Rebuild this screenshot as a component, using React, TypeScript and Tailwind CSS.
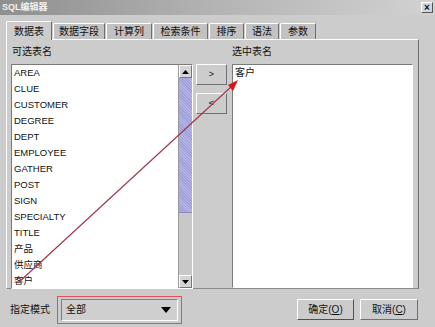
import React from "react";

const tabs = [
  { label: "数据表", w: "w-[46px]", active: true },
  { label: "数据字段", w: "w-[52px]" },
  { label: "计算列", w: "w-[46px]" },
  { label: "检索条件", w: "w-[55px]" },
  { label: "排序", w: "w-[35px]" },
  { label: "语法", w: "w-[34px]" },
  { label: "参数", w: "w-[36px]" },
];

const tables = [
  "AREA",
  "CLUE",
  "CUSTOMER",
  "DEGREE",
  "DEPT",
  "EMPLOYEE",
  "GATHER",
  "POST",
  "SIGN",
  "SPECIALTY",
  "TITLE",
  "产品",
  "供应商",
  "客户",
];

const font = "font-['Liberation_Sans','Noto_Sans_CJK_SC',sans-serif]";

function Tri({ up }: { up?: boolean }) {
  return (
    <svg width="7" height="4" viewBox="0 0 7 4">
      <path d={up ? "M0 4 L3.5 0 L7 4 Z" : "M0 0 L7 0 L3.5 4 Z"} fill="#000" />
    </svg>
  );
}

export default function App() {
  return (
    <div className={`relative w-[435px] h-[327px] overflow-hidden bg-[#cccccc] text-[#111] ${font}`}>
      {/* title bar */}
      <div className="h-[15px] flex items-center justify-between pl-[2px] pr-[2px] bg-gradient-to-r from-[#8f8f8f] via-[#b4b4b4] to-[#d2d2d2]">
        <span className="text-[9px] font-bold text-[#f2f2f2] leading-none">SQL编辑器</span>
        <div className="w-[12px] h-[11px] bg-[#d6d6d6] border-t border-l border-white border-r border-b border-r-[#555] border-b-[#555] flex items-center justify-center text-[10px] font-bold leading-none">
          ×
        </div>
      </div>

      {/* tabs */}
      <div className="h-[24px] flex items-end gap-[1px] pl-[6px]">
        {tabs.map((t) => (
          <div
            key={t.label}
            className={`${t.w} flex items-center justify-center text-[10px] rounded-tl-[2px] border-t border-l border-white border-r border-r-[#6e6e6e] ${
              t.active ? "h-[19px] bg-[#cccccc] relative top-[1px] z-10" : "h-[16px] bg-[#c2c2c2]"
            }`}
          >
            {t.label}
          </div>
        ))}
      </div>

      {/* panel */}
      <div className="ml-[6px] w-[413px] h-[250px] border-t border-l border-white border-r border-b border-r-[#6e6e6e] border-b-[#8a8a8a] pl-[4px] pt-[5px] flex">
        {/* left list */}
        <div className="flex flex-col">
          <div className="h-[14px] text-[10px] leading-[14px] pl-[1px]">可选表名</div>
          <div className="mt-[5px] w-[182px] h-[225px] border-t border-l border-[#7a7a7a] border-r border-b border-r-white border-b-white bg-white flex">
            <div className="flex-1 pl-[2px] overflow-hidden">
              {tables.map((n) => (
                <div key={n} className="h-[16px] leading-[16px] text-[9.5px] whitespace-nowrap">
                  {n}
                </div>
              ))}
            </div>
            <div className="w-[14px] flex flex-col bg-[#c8c8c8] border-l border-[#9a9a9a]">
              <div className="h-[13px] bg-[#d4d4d4] border-t border-l border-white border-r border-b border-r-[#777] border-b-[#777] flex items-center justify-center">
                <Tri up />
              </div>
              <div className="h-[135px] bg-[#a8a8dc] bg-[repeating-linear-gradient(45deg,#a0a0d8_0px,#a0a0d8_1px,#b4b4e6_1px,#b4b4e6_2px)] border-b border-[#8a8ab8]" />
              <div className="flex-1" />
              <div className="h-[13px] bg-[#d4d4d4] border-t border-l border-white border-r border-b border-r-[#777] border-b-[#777] flex items-center justify-center">
                <Tri />
              </div>
            </div>
          </div>
        </div>

        {/* move buttons */}
        <div className="pt-[19px] pl-[3px] pr-[5px] flex flex-col gap-[8px]">
          <div className="w-[31px] h-[21px] border border-t-white border-l-white border-r-[#707070] border-b-[#707070] flex items-center justify-center text-[9px]">
            &gt;
          </div>
          <div className="w-[31px] h-[21px] border border-t-white border-l-white border-r-[#707070] border-b-[#707070] flex items-center justify-center text-[9px]">
            &lt;
          </div>
        </div>

        {/* right list */}
        <div className="flex flex-col">
          <div className="h-[14px] text-[10px] leading-[14px]">选中表名</div>
          <div className="mt-[5px] w-[181px] h-[225px] border-t border-l border-[#7a7a7a] border-r border-b border-r-white border-b-white bg-white pl-[2px]">
            <div className="h-[16px] leading-[16px] text-[10px]">客户</div>
          </div>
        </div>
      </div>

      {/* bottom row */}
      <div className="h-[38px] flex items-center pl-[10px] pt-[3px]">
        <span className="text-[10px] w-[47px]">指定模式</span>
        <div className="w-[125px] h-[28px] border border-[#e05060] flex items-center justify-center">
          <div className="w-[117px] h-[22px] bg-[#cfcfcf] border-t border-l border-[#808080] border-r border-b border-r-white border-b-white flex items-center justify-between pl-[4px] pr-[6px]">
            <span className="text-[10px]">全部</span>
            <svg width="10" height="6" viewBox="0 0 10 6">
              <path d="M0 0 L10 0 L5 6 Z" fill="#000" />
            </svg>
          </div>
        </div>
        <div className="ml-[115px] flex gap-[6px]">
          <div className="w-[57px] h-[21px] border border-t-white border-l-white border-r-[#505050] border-b-[#505050] flex items-center justify-center text-[10px]">
            确定(<span className="underline">O</span>)
          </div>
          <div className="w-[58px] h-[21px] border border-t-white border-l-white border-r-[#707070] border-b-[#707070] flex items-center justify-center text-[10px]">
            取消(<span className="underline">C</span>)
          </div>
        </div>
      </div>

      {/* annotation arrow */}
      <svg className="absolute left-0 top-0 pointer-events-none" width="435" height="327" viewBox="0 0 435 327">
        <line x1="18" y1="283" x2="232" y2="86" stroke="#a03a4a" strokeWidth="1.2" />
        <path d="M238 80 L228 85 L233 91 Z" fill="#e01010" />
      </svg>
    </div>
  );
}
